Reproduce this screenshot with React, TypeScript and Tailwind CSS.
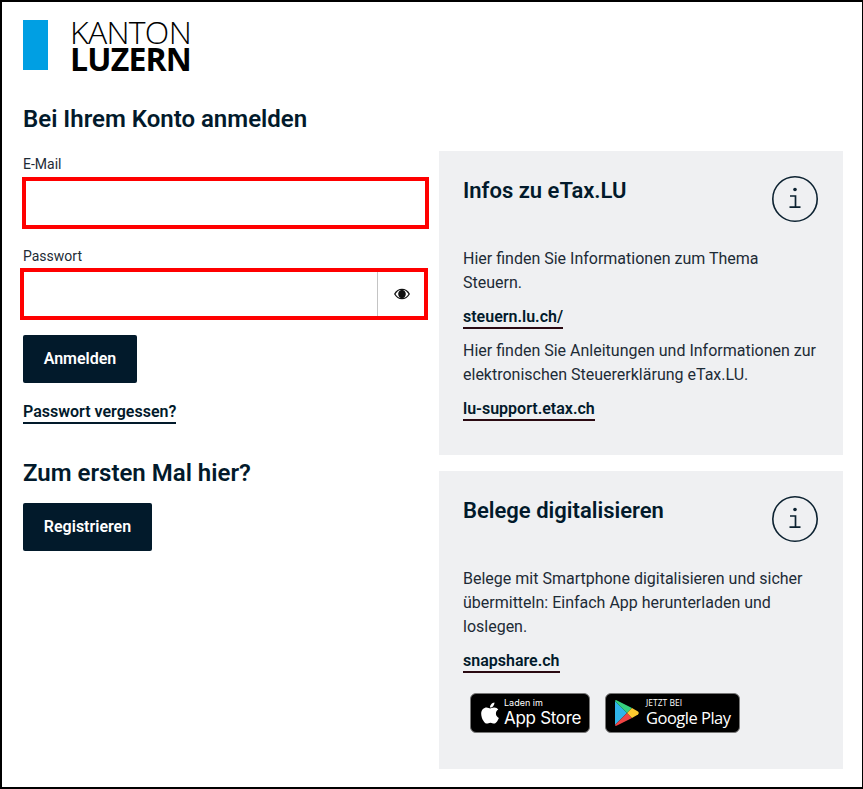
import { FaApple } from "react-icons/fa";

const ink = "text-[#021a2b]";

function InfoIcon() {
  return (
    <svg width="46" height="46" viewBox="0 0 46 46" fill="none" className="shrink-0">
      <circle cx="23" cy="23" r="22.2" stroke="#0c2231" strokeWidth="1.6" />
      <circle cx="23" cy="13.5" r="1.8" fill="#0c2231" />
      <path d="M18 20h5.5v11M17.5 31.2h11" stroke="#0c2231" strokeWidth="1.7" />
    </svg>
  );
}

function EyeIcon() {
  return (
    <svg width="16" height="12" viewBox="0 0 16 12">
      <path
        fillRule="evenodd"
        fill="#111"
        d="M0 6C2 2.4 4.8.8 8 .8S14 2.400 16 6c-2 3.600-4.800 5.200-8 5.200S2 9.600 0 6Zm1.500 0C3 8.600 5 10 7 10.100 5.300 9.500 4.200 7.900 4.200 6S5.300 2.500 7 1.900C5 2 3 3.400 1.500 6Zm7.500 4.100C11 10 13 8.600 14.500 6 13 3.400 11 2 9 1.900 10.700 2.500 11.800 4.100 11.800 6S10.700 9.500 9 10.100Z"
      />
      <circle cx="8" cy="6" r="3" fill="#111" />
    </svg>
  );
}

function PlayLogo() {
  return (
    <svg width="24" height="26" viewBox="0 0 24 26" className="shrink-0">
      <path d="M0 1v24l12-12z" fill="#2fb4ea" />
      <path d="M0 1l12 12 5-5L1.500.2C.800-.1.300.2 0 1z" fill="#35d07f" />
      <path d="M0 25l12-12 5 5-15.500 7.800c-.7.300-1.200 0-1.500-.8z" fill="#ef4444" />
      <path d="M17 8l6 3.500c1 .7 1 2.300 0 3L17 18l-5-5z" fill="#fdc92f" />
    </svg>
  );
}

function SectionLink({ href, children }: { href: string; children: string }) {
  return (
    <a href={href} className="inline-block border-b-2 border-[#2a0a12] text-base leading-[21px] font-semibold text-[#021a2b]">
      {children}
    </a>
  );
}

function Card({ title, className, children }: { title: string; className: string; children: React.ReactNode }) {
  return (
    <section className={`bg-[#eff0f2] pt-[26px] pl-6 pr-6 ${className}`}>
      <div className="flex items-start justify-between">
        <h2 className={`text-[22px] leading-[28px] font-semibold ${ink}`}>{title}</h2>
        <div className="-mt-[1px] mr-[1px]">
          <InfoIcon />
        </div>
      </div>
      {children}
    </section>
  );
}

export default function App() {
  return (
    <div className="box-border h-[789px] w-[863px] border-2 border-r-[1px] border-black bg-white font-['Roboto','Liberation_Sans',sans-serif]">
      <div className="pl-[21px] pt-[18px]">
        {/* logo */}
        <div className="flex h-[50px] items-stretch gap-[22px]">
          <div className="w-[25px] bg-[#009fe3]" />
          <div className="flex flex-col font-['Open_Sans',sans-serif] text-black">
            <span className="h-[27px] text-[32px] leading-[24px] font-light tracking-[-0.7px]">KANTON</span>
            <span className="h-[23px] text-[32px] leading-[23px] font-bold tracking-[-0.8px]">LUZERN</span>
          </div>
        </div>

        <h1 className={`mt-[33px] text-2xl leading-8 font-semibold ${ink}`}>Bei Ihrem Konto anmelden</h1>

        <div className="mt-[16px] flex">
          {/* left column */}
          <div className="w-[416px] pt-[3px]">
            <label className="block text-sm leading-5 text-[#1d2b36]">E-Mail</label>
            <input
              type="email"
              className="mt-[3px] -ml-[1px] block h-[52px] w-[407px] border-4 border-[#ff0000] bg-white outline-none"
            />

            <label className="mt-[17px] block text-sm leading-5 text-[#1d2b36]">Passwort</label>
            <div className="mt-[2px] -ml-[3px] flex h-[52px] w-[408px] border-4 border-[#ff0000] bg-white">
              <input type="password" className="min-w-0 flex-1 bg-white outline-none" />
              <div className="flex w-[47px] items-center justify-center border-l border-[#c4c4c4] pl-[2px]">
                <EyeIcon />
              </div>
            </div>

            <button className="mt-[15px] block h-12 w-[114px] rounded-[2px] bg-[#021a2b] text-base font-semibold text-white">
              Anmelden
            </button>

            <a href="#" className={`mt-[18px] inline-block border-b-2 border-[#021a2b] text-base leading-[21px] font-semibold ${ink}`}>
              Passwort vergessen?
            </a>

            <h2 className={`mt-[33px] text-2xl leading-8 font-semibold ${ink}`}>Zum ersten Mal hier?</h2>

            <button className="mt-[14px] block h-12 w-[129px] rounded-[2px] bg-[#021a2b] text-base font-semibold text-white">
              Registrieren
            </button>
          </div>

          {/* right column */}
          <div className="flex w-[404px] flex-col gap-4">
            <Card title="Infos zu eTax.LU" className="h-[304px]">
              <p className="mt-[25px] text-base leading-6 text-[#1d2b36]">
                Hier finden Sie Informationen zum Thema Steuern.
              </p>
              <div className="mt-[10px]">
                <SectionLink href="#">steuern.lu.ch/</SectionLink>
              </div>
              <p className="mt-[10px] text-base leading-6 text-[#1d2b36]">
                Hier finden Sie Anleitungen und Informationen zur elektronischen Steuererklärung eTax.LU.
              </p>
              <div className="mt-[10px]">
                <SectionLink href="#">lu-support.etax.ch</SectionLink>
              </div>
            </Card>

            <Card title="Belege digitalisieren" className="h-[298px]">
              <p className="mt-[25px] text-base leading-6 text-[#1d2b36]">
                Belege mit Smartphone digitalisieren und sicher übermitteln: Einfach App herunterladen und loslegen.
              </p>
              <div className="mt-[10px]">
                <SectionLink href="#">snapshare.ch</SectionLink>
              </div>
              <div className="mt-[20px] ml-[7px] flex gap-[15px]">
                <a href="#" className="flex h-10 w-[120px] items-center rounded-[6px] border border-[#777] bg-black pl-[7px] text-white">
                  <FaApple className="size-[24px] shrink-0" />
                  <div className="ml-[2px] flex flex-col font-['Inter',sans-serif]">
                    <span className="text-[9px] leading-[10px]">Laden im</span>
                    <span className="text-[17px] leading-[20px] tracking-[-0.3px]">App Store</span>
                  </div>
                </a>
                <a href="#" className="flex h-10 w-[135px] items-center rounded-[6px] border border-[#777] bg-black pl-[9px] text-white">
                  <PlayLogo />
                  <div className="ml-[7px] flex flex-col font-['Open_Sans',sans-serif]">
                    <span className="text-[8.500px] leading-[10px]">JETZT BEI</span>
                    <span className="text-[16.500px] leading-[20px] tracking-[-0.500px]">Google Play</span>
                  </div>
                </a>
              </div>
            </Card>
          </div>
        </div>
      </div>
    </div>
  );
}
